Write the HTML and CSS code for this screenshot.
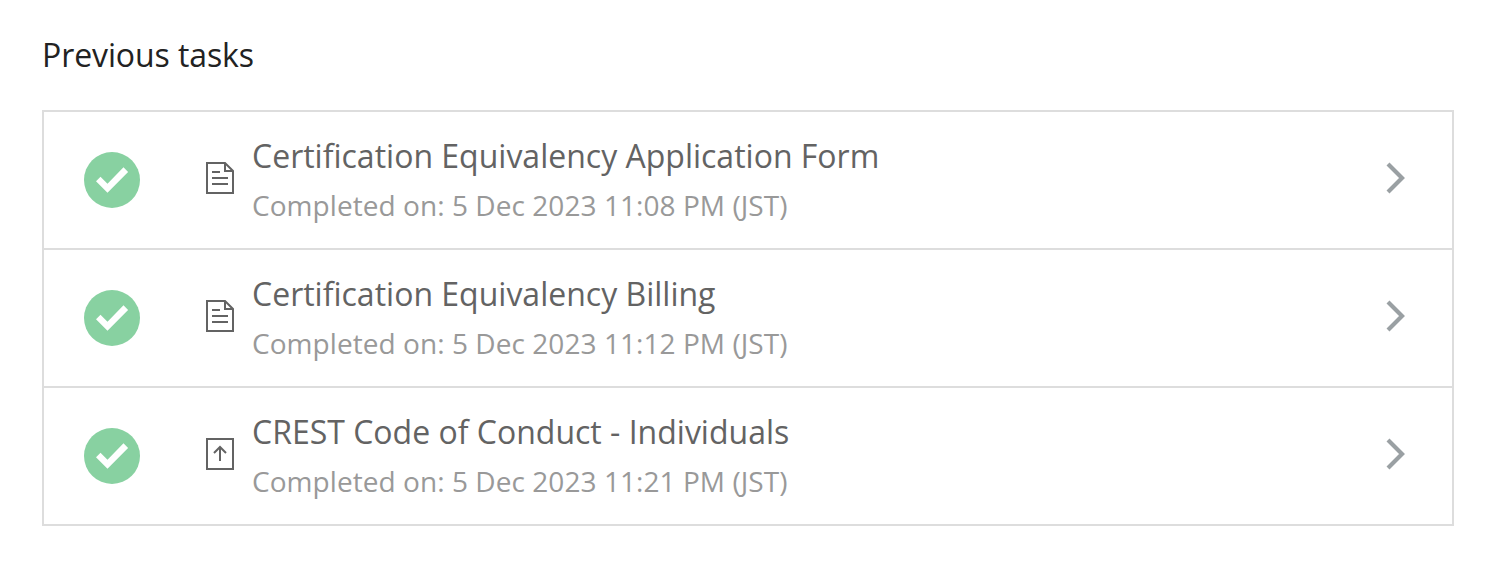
FILE: index.html
```html
<!DOCTYPE html>
<html lang="en">
<head>
    <meta charset="UTF-8">
    <meta name="viewport" content="width=device-width, initial-scale=1.0">
    <title>Previous tasks</title>
    <link rel="stylesheet" href="styles.css">
</head>
<body>
    <h2 class="tasks-title">Previous tasks</h2>
    <div class="task-list">
        <a class="task" href="#">
            <svg class="status" viewBox="0 0 56 56"><circle cx="28" cy="28" r="28"/><path d="M12 29.300l4.500-4.500 7 7 16-16.600 4.600 4.700-20.600 20.800z"/></svg>
            <svg class="type-icon" viewBox="0 0 28 32"><path d="M1 1h18l8 8v22H1zM19 1v8h8M6 10h8M6 16h16M6 22h16"/></svg>
            <div class="task-text">
                <div class="task-name">Certification Equivalency Application Form</div>
                <div class="task-date">Completed on: 5 Dec 2023 11:08 PM (JST)</div>
            </div>
            <svg class="arrow" viewBox="0 0 20 32"><path d="M2 2l14 14L2 30"/></svg>
        </a>
        <a class="task" href="#">
            <svg class="status" viewBox="0 0 56 56"><circle cx="28" cy="28" r="28"/><path d="M12 29.300l4.500-4.500 7 7 16-16.600 4.600 4.700-20.600 20.800z"/></svg>
            <svg class="type-icon" viewBox="0 0 28 32"><path d="M1 1h18l8 8v22H1zM19 1v8h8M6 10h8M6 16h16M6 22h16"/></svg>
            <div class="task-text">
                <div class="task-name">Certification Equivalency Billing</div>
                <div class="task-date">Completed on: 5 Dec 2023 11:12 PM (JST)</div>
            </div>
            <svg class="arrow" viewBox="0 0 20 32"><path d="M2 2l14 14L2 30"/></svg>
        </a>
        <a class="task" href="#">
            <svg class="status" viewBox="0 0 56 56"><circle cx="28" cy="28" r="28"/><path d="M12 29.300l4.500-4.500 7 7 16-16.600 4.600 4.700-20.600 20.800z"/></svg>
            <svg class="type-icon" viewBox="0 0 28 32"><path d="M1 1h26v30H1zM14 23V9M8 15l6-6 6 6"/></svg>
            <div class="task-text">
                <div class="task-name">CREST Code of Conduct - Individuals</div>
                <div class="task-date">Completed on: 5 Dec 2023 11:21 PM (JST)</div>
            </div>
            <svg class="arrow" viewBox="0 0 20 32"><path d="M2 2l14 14L2 30"/></svg>
        </a>
    </div>
</body>
</html>
```
FILE: styles.css
```css
body {
    margin: 0;
    padding: 33px 54px 0 42px;
    font-family: "Open Sans", sans-serif;
    background-color: #fff;
}
.tasks-title {
    margin: 0 0 33px;
    font-size: 32px;
    line-height: 44px;
    font-weight: 400;
    letter-spacing: -0.1px;
    color: #222;
}
.task-list {
    border: 2px solid #ddd;
}
.task {
    display: flex;
    align-items: center;
    height: 136px;
    padding: 0 46px 0 40px;
    color: #636363;
    text-decoration: none;
}
.task + .task {
    border-top: 2px solid #ddd;
}
.status {
    width: 56px;
    height: 56px;
    margin-right: 66px;
}
.status circle {
    fill: #88d1a1;
}
.status path {
    fill: #fff;
}
.type-icon {
    width: 28px;
    height: 32px;
    margin: 0 18px 4px 0;
}
.type-icon path {
    fill: none;
    stroke: #636363;
    stroke-width: 2;
}
.task-text {
    flex: 1;
    padding-bottom: 2px;
}
.task-name {
    font-size: 32px;
    line-height: 52px;
}
.task-date {
    font-size: 28px;
    line-height: 46px;
    letter-spacing: 0.06px;
    color: #999;
}
.arrow {
    width: 20px;
    height: 32px;
    margin-bottom: 4px;
}
.arrow path {
    fill: none;
    stroke: #9aa0a3;
    stroke-width: 4.2;
}
```
